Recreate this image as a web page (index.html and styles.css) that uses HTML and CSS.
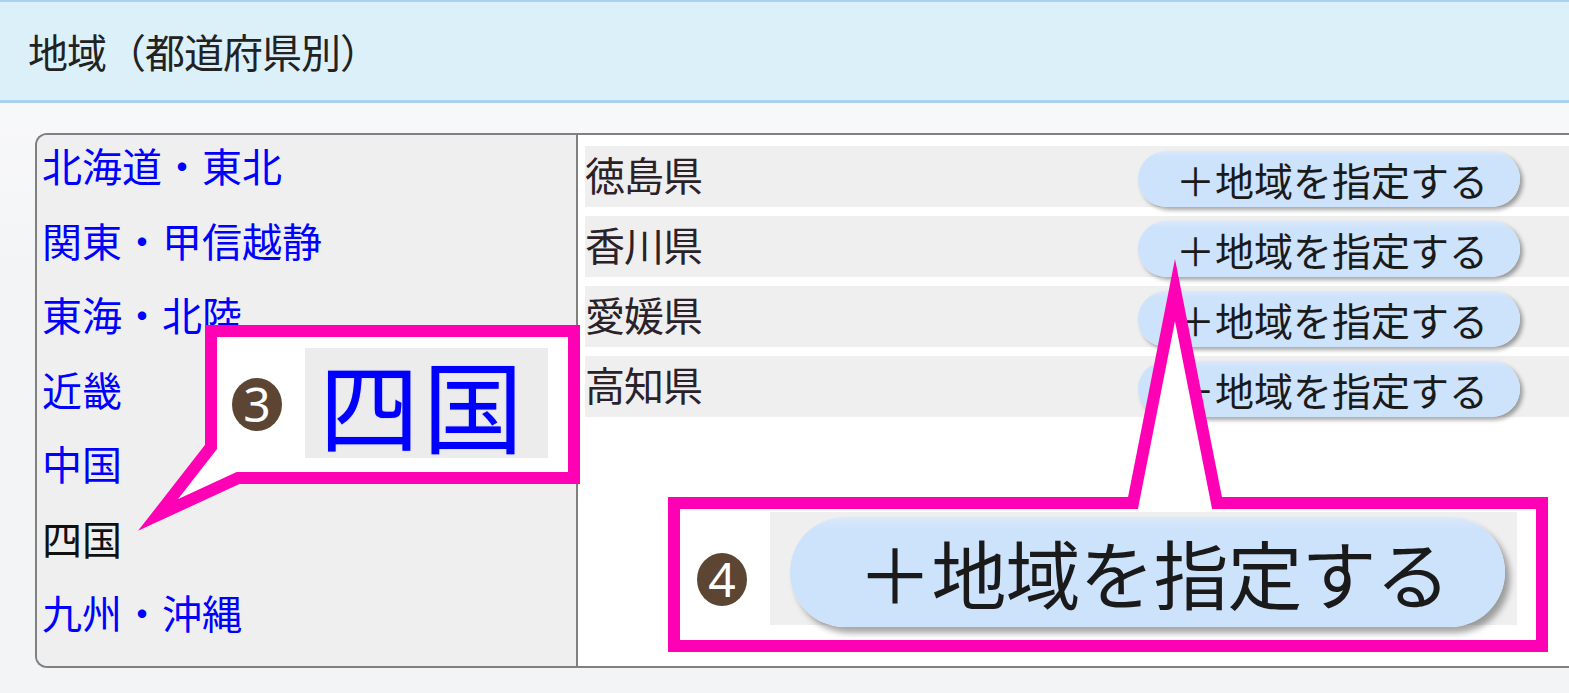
FILE: index.html
```html
<!DOCTYPE html>
<html lang="ja">
<head>
  <meta charset="UTF-8" />
  <meta name="viewport" content="width=device-width, initial-scale=1.0" />
  <title>地域（都道府県別）</title>
  <link rel="stylesheet" href="styles.css">
</head>
<body>

<div class="section-head">
  <h2>地域（都道府県別）</h2>
</div>

<div class="area">
  <div class="area-box">

    <!-- Region list -->
    <ul class="region-list">
      <li><a href="#">北海道・東北</a></li>
      <li><a href="#">関東・甲信越静</a></li>
      <li><a href="#">東海・北陸</a></li>
      <li><a href="#">近畿</a></li>
      <li><a href="#">中国</a></li>
      <li class="current">四国</li>
      <li><a href="#">九州・沖縄</a></li>
    </ul>

    <!-- Prefectures -->
    <div class="pref-list">
      <div class="pref-row">
        <span class="pref-name">徳島県</span>
        <button class="btn-add">＋地域を指定する</button>
      </div>
      <div class="pref-row">
        <span class="pref-name">香川県</span>
        <button class="btn-add">＋地域を指定する</button>
      </div>
      <div class="pref-row">
        <span class="pref-name">愛媛県</span>
        <button class="btn-add">＋地域を指定する</button>
      </div>
      <div class="pref-row">
        <span class="pref-name">高知県</span>
        <button class="btn-add">＋地域を指定する</button>
      </div>
    </div>

  </div>
</div>

<!-- Annotation callouts -->
<div class="annot">
  <svg class="annot-lines" width="1569" height="693" viewBox="0 0 1569 693">
    <polygon points="211,331 574,331 574,478 238,478 158,515 211,447" />
    <polygon points="674,503 1133,503 1175,290 1217,503 1542,503 1542,646 674,646" />
  </svg>

  <span class="num num-3">3</span>
  <div class="zoom-3">四国</div>

  <span class="num num-4">4</span>
  <div class="zoom-4">
    <span class="btn-add big">＋地域を指定する</span>
  </div>
</div>

</body>
</html>
```

FILE: styles.css
```css
*, *::before, *::after { box-sizing: border-box; margin: 0; padding: 0; }

:root {
  --head-bg:    #dcf0f9;
  --head-line:  #a8d2f0;
  --panel:      #efefef;
  --frame:      #808080;
  --link:       #0000ff;
  --text:       #2a2228;
  --btn-bg:     #cde2fb;
  --pink:       #ff00b4;
  --brown:      #5c4633;
}

body {
  font-family: "Noto Sans CJK JP", "Noto Sans", sans-serif;
  background: linear-gradient(180deg, #fbfbfc 0%, #f3f4f6 40%, #f3f4f6 100%);
  color: var(--text);
  width: 1569px;
  height: 693px;
  overflow: hidden;
  position: relative;
}

.section-head {
  height: 103px;
  background: var(--head-bg);
  border-top: 2px solid var(--head-line);
  border-bottom: 3px solid var(--head-line);
  display: flex;
  align-items: center;
  padding-left: 28px;
}

.section-head h2 {
  font-size: 40px;
  font-weight: 400;
  color: #222;
  line-height: 1;
  letter-spacing: -1px;
}

.area {
  padding: 30px 0 0 35px;
}

.area-box {
  display: flex;
  height: 535px;
  width: 1560px;
  border: 2px solid var(--frame);
  border-right: none;
  border-radius: 12px 0 0 12px;
  background: #fff;
  overflow: hidden;
}

/* left column */
.region-list {
  list-style: none;
  width: 541px;
  flex-shrink: 0;
  background: var(--panel);
  border-right: 2px solid var(--frame);
  padding: 5px 0 0 5px;
}

.region-list li {
  font-size: 40px;
  line-height: 50px;
  margin-bottom: 24.5px;
  color: #111;
}

.region-list a {
  color: var(--link);
  text-decoration: none;
}

/* right column */
.pref-list {
  flex: 1;
  padding: 11px 0 0 7px;
  display: flex;
  flex-direction: column;
  gap: 9px;
}

.pref-row {
  display: grid;
  grid-template-columns: 553px 382px;
  height: 61px;
  background: var(--panel);
}

.pref-name {
  font-size: 40px;
  line-height: 56px;
  color: var(--text);
  letter-spacing: -1px;
}

.btn-add {
  margin-top: 5px;
  height: 56px;
  border: none;
  border-radius: 28px;
  background: linear-gradient(180deg, #dbe9fb 0%, var(--btn-bg) 12%, var(--btn-bg) 100%);
  box-shadow: 3px 3px 4px rgba(0, 0, 0, 0.35);
  font-family: inherit;
  font-size: 39px;
  line-height: 56px;
  color: #1a1a1a;
  text-align: center;
  cursor: pointer;
  padding-left: 6px;
}

/* callouts */
.annot {
  position: absolute;
  inset: 0;
  pointer-events: none;
}

.annot-lines {
  position: absolute;
  left: 0;
  top: 0;
}

.annot-lines polygon {
  fill: #fff;
  stroke: var(--pink);
  stroke-width: 12;
  stroke-linejoin: miter;
  stroke-miterlimit: 10;
}

.num {
  position: absolute;
  width: 50px;
  height: 53px;
  border-radius: 50%;
  background: var(--brown);
  color: #fff;
  font-family: "Noto Sans", sans-serif;
  font-size: 48px;
  line-height: 52px;
  text-align: center;
}

.num-3 { left: 232px; top: 378px; }
.num-4 { left: 697px; top: 553px; }

.zoom-3 {
  position: absolute;
  left: 305px;
  top: 348px;
  width: 243px;
  height: 110px;
  background: #ececec;
  color: var(--link);
  font-size: 100px;
  line-height: 110px;
  padding-left: 14px;
  letter-spacing: 4px;
  text-shadow: 0 0 1px rgba(0, 0, 255, 0.5);
}

.zoom-4 {
  position: absolute;
  left: 770px;
  top: 512px;
  width: 747px;
  height: 113px;
  background: var(--panel);
  padding: 5px 0 0 20px;
}

.btn-add.big {
  display: block;
  margin-top: 0;
  width: 715px;
  height: 110px;
  border-radius: 55px;
  font-size: 75px;
  line-height: 110px;
  padding-left: 12px;
  letter-spacing: -1px;
  box-shadow: 5px 6px 6px rgba(0, 0, 0, 0.35);
}
```
